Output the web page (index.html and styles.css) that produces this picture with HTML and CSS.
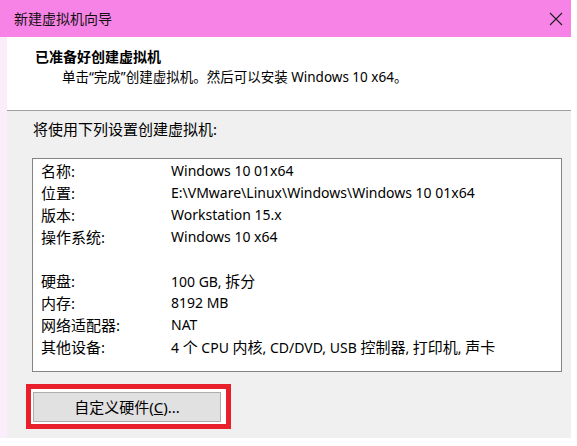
FILE: index.html
```html
<!DOCTYPE html>
<html lang="zh-CN">
  <head>
    <meta charset="UTF-8" />
    <meta name="viewport" content="width=device-width, initial-scale=1.0" />
    <title>新建虚拟机向导</title>
    <link rel="stylesheet" href="styles.css">
  </head>
  <body>
    <div class="window">
      <div class="titlebar">
        <span class="title">新建虚拟机向导</span>
        <svg class="close" width="14" height="14" viewBox="0 0 14 14">
          <path d="M1 1 L13 13 M13 1 L1 13" stroke="#1e1e1e" stroke-width="1.1" fill="none" />
        </svg>
      </div>

      <div class="main">
        <div class="header">
          <div class="heading">已准备好创建虚拟机</div>
          <div class="subheading">单击“完成”创建虚拟机。然后可以安装 Windows 10 x64。</div>
        </div>

        <div class="body">
          <div class="intro">将使用下列设置创建虚拟机:</div>

          <div class="summary">
            <div class="label">名称:</div><div class="value">Windows 10 01x64</div>
            <div class="label">位置:</div><div class="value">E:\VMware\Linux\Windows\Windows 10 01x64</div>
            <div class="label">版本:</div><div class="value">Workstation 15.x</div>
            <div class="label">操作系统:</div><div class="value">Windows 10 x64</div>
            <div class="label"></div><div class="value"></div>
            <div class="label">硬盘:</div><div class="value">100 GB, <span class="zh">拆分</span></div>
            <div class="label">内存:</div><div class="value">8192 MB</div>
            <div class="label">网络适配器:</div><div class="value">NAT</div>
            <div class="label">其他设备:</div>
            <div class="value">4 <span class="zh">个</span> CPU <span class="zh">内核</span>, CD/DVD, USB <span class="zh">控制器</span>, <span class="zh">打印机</span>, <span class="zh">声卡</span></div>
          </div>

          <div class="highlight">
            <button class="btn" type="button">自定义硬件(<u>C</u>)...</button>
          </div>
        </div>
      </div>
    </div>
  </body>
</html>
```

FILE: styles.css
```css
body {
  margin: 0;
  background-color: #ffffff;
  font-family: "Noto Sans", "Noto Sans CJK SC", sans-serif;
  color: #000000;
}
.window {
  width: 571px;
  height: 438px;
  display: flex;
  flex-direction: column;
}
.titlebar {
  height: 37px;
  background-color: #f883e6;
  display: flex;
  align-items: center;
  justify-content: space-between;
  padding: 0 8px 0 14px;
  box-sizing: border-box;
}
.title {
  font-size: 14px;
  line-height: 20px;
  color: #111111;
}
.close {
  margin-top: 1px;
}
.main {
  flex: 1;
  display: flex;
  flex-direction: column;
  border-left: 7px solid #fbedf9;
}
.header {
  height: 74px;
  box-sizing: border-box;
  background-color: #ffffff;
  border-bottom: 1px solid #a0a0a0;
  padding: 10px 0 0 28px;
}
.heading {
  font-size: 14px;
  font-weight: 700;
  line-height: 20px;
}
.subheading {
  font-size: 13.5px;
  line-height: 20px;
  padding-left: 27px;
}
.body {
  flex: 1;
  background-color: #f0f0f0;
  padding: 8px 0 0 25px;
}
.intro {
  font-size: 15px;
  line-height: 20px;
  padding-left: 1px;
}
.summary {
  margin-top: 19px;
  width: 530px;
  height: 214px;
  box-sizing: border-box;
  background-color: #ffffff;
  border: 1px solid #848484;
  padding: 1px 0 0 8px;
  display: grid;
  grid-template-columns: 130px 1fr;
  grid-auto-rows: 22px;
  align-content: start;
}
.label {
  font-size: 15px;
  line-height: 22px;
}
.value {
  font-size: 14px;
  line-height: 22px;
}
.zh {
  font-size: 15px;
}
.highlight {
  margin: 12px 0 0 -6px;
  width: 205px;
  height: 45px;
  box-sizing: border-box;
  border: 5px solid #e8202c;
  background-color: #ffffff;
  padding: 3px 5px 2px 2px;
}
.btn {
  display: block;
  width: 188px;
  height: 30px;
  margin: 0;
  padding: 0;
  background-color: #e1e1e1;
  border: 1px solid #adadad;
  font-family: "Noto Sans", "Noto Sans CJK SC", sans-serif;
  font-size: 15px;
  line-height: 20px;
  color: #000000;
}
```
